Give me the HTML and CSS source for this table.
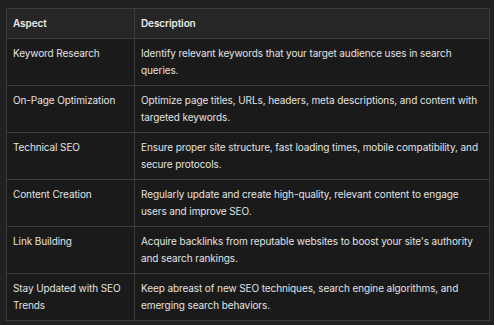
FILE: index.html
```html
<!DOCTYPE html>
<html>
<head>
    <link rel="stylesheet" href="styles.css">
</head>
<body>
    <table class="seoTable">
        <tr>
            <th class="aspectCol">Aspect</th>
            <th>Description</th>
        </tr>
        <tr>
            <td>Keyword Research</td>
            <td>Identify relevant keywords that your target audience uses in search queries.</td>
        </tr>
        <tr>
            <td>On-Page Optimization</td>
            <td>Optimize page titles, URLs, headers, meta descriptions, and content with targeted keywords.</td>
        </tr>
        <tr>
            <td>Technical SEO</td>
            <td>Ensure proper site structure, fast loading times, mobile compatibility, and secure protocols.</td>
        </tr>
        <tr>
            <td>Content Creation</td>
            <td>Regularly update and create high-quality, relevant content to engage users and improve SEO.</td>
        </tr>
        <tr>
            <td>Link Building</td>
            <td>Acquire backlinks from reputable websites to boost your site's authority and search rankings.</td>
        </tr>
        <tr>
            <td>Stay Updated with SEO Trends</td>
            <td>Keep abreast of new SEO techniques, search engine algorithms, and emerging search behaviors.</td>
        </tr>
    </table>
</body>
</html>
```

FILE: styles.css
```css
body {
    margin: 0;
    padding: 8px 4px 0 6px;
    background-color: #212121;
    font-family: Inter, "Noto Sans", sans-serif;
    font-size: 10px;
    line-height: 17px;
    letter-spacing: -0.1px;
    color: #e3e3e3;
}

.seoTable {
    width: 484px;
    table-layout: fixed;
    border-collapse: collapse;
    background-color: #1a1a1a;
}

.seoTable th,
.seoTable td {
    border: 1px solid #3b3b3b;
    padding: 6px 5px 6px 6px;
    text-align: left;
    vertical-align: top;
}

.seoTable th {
    background-color: #262626;
    font-weight: 600;
    color: #ececec;
}

.aspectCol {
    width: 116px;
}
```
